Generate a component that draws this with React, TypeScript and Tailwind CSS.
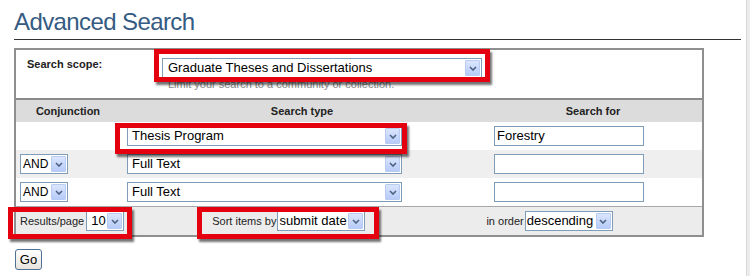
const font = "font-['Liberation_Sans',Arial,Helvetica,sans-serif]";

function Arrow() {
  return (
    <div className="m-px flex w-[15px] shrink-0 items-center justify-center rounded-[1px] border border-[#b8cbf3] bg-gradient-to-b from-[#dbe6fd] to-[#b7cbf8]">
      <svg width="8" height="5" viewBox="0 0 8 5">
        <path d="M1 1 L4 4 L7 1" fill="none" stroke="#4d6185" strokeWidth="1.6" />
      </svg>
    </div>
  );
}

function Select({
  text,
  width,
  size = "text-[13px]",
  pad = "pl-[3px]",
}: {
  text: string;
  width: string;
  size?: string;
  pad?: string;
}) {
  return (
    <div className={`flex h-[20px] shrink-0 border border-[#7f9db9] bg-white ${width}`}>
      <span className={`flex-1 overflow-hidden whitespace-nowrap leading-[18px] text-black ${pad} ${size}`}>
        {text}
      </span>
      <Arrow />
    </div>
  );
}

function Input({ value = "" }: { value?: string }) {
  return (
    <div className="h-[20px] w-[150px] border border-[#7f9db9] bg-white pl-[2px] text-[13px] leading-[18px] text-black">
      {value}
    </div>
  );
}

// annotation frames drawn over the form
function Mark({ className }: { className: string }) {
  return (
    <div
      className={`pointer-events-none absolute border-[5px] border-[#e5000f] shadow-[2px_3px_2px_rgba(0,0,0,0.55)] ${className}`}
    />
  );
}

function Row({ bg, conj, type }: { bg: string; conj?: boolean; type: string }) {
  return (
    <div className={`flex h-[28px] items-center ${bg}`}>
      <div className="w-[104px] pl-[4px]">
        {conj && <Select text="AND" width="w-[48px]" size="text-[12px]" pad="pl-[2px]" />}
      </div>
      <div className="w-[364px] pl-[7px]">
        <Select text={type} width="w-[275px]" pad="pl-[4px]" />
      </div>
      <div className="pl-[10px]">
        <Input value={type === "Thesis Program" ? "Forestry" : ""} />
      </div>
    </div>
  );
}

export default function App() {
  return (
    <div className={`relative flex h-[276px] w-[750px] overflow-hidden bg-white ${font}`}>
      <div className="flex flex-1 flex-col pl-[14px] pt-[8px]">
        <h1 className="text-[24px] leading-[28px] tracking-[-0.6px] text-[#355b82]">Advanced Search</h1>
        <div className="mt-[3px] h-px w-[727px] bg-[#333]" />

        <div className="mt-[8px] w-[690px] border-2 border-[#8f8f8f] text-[11px] text-[#222]">
          <div className="flex h-[50px] items-start border-b-2 border-[#8a8a8a] pl-[11px] pt-[7px]">
            <div className="w-[135px] font-bold leading-[14px]">Search scope:</div>
            <div className="mt-px flex flex-col">
              <Select text="Graduate Theses and Dissertations" width="w-[320px]" pad="pl-[5px]" />
              <span className="pl-[6px] text-[11px] leading-[12px] text-[#8a8a8a]">
                Limit your search to a community or collection.
              </span>
            </div>
          </div>

          <div className="flex h-[22px] items-center bg-[#dcdcdc] font-bold">
            <div className="w-[104px] text-center">Conjunction</div>
            <div className="w-[364px] text-center">Search type</div>
            <div className="flex-1 text-center">Search for</div>
          </div>

          <Row bg="bg-white" type="Thesis Program" />
          <Row bg="bg-[#efefef]" conj type="Full Text" />
          <Row bg="bg-white" conj type="Full Text" />

          <div className="flex h-[29px] items-center border-t border-[#a8a8a8] bg-[#ececec] pl-[4px]">
            <span className="mr-[2px]">Results/page</span>
            <Select text="10" width="w-[38px]" pad="pl-[4px]" />
            <span className="ml-[88px] mr-px">Sort items by</span>
            <Select text="submit date" width="w-[88px]" pad="pl-[1px]" />
            <span className="ml-[121px] mr-px">in order</span>
            <Select text="descending" width="w-[88px]" pad="pl-[1px]" />
          </div>
        </div>

        <button className="ml-px mt-[12px] h-[21px] w-[27px] rounded-[3px] border border-[#4f7196] bg-gradient-to-b from-white to-[#e6e4dc] text-[13px] leading-[19px] text-black">
          Go
        </button>
      </div>
      <div className="w-[4px] border-l border-[#d8d8d8] bg-[#ececec]" />

      <Mark className="left-[154px] top-[49px] h-[33px] w-[336px]" />
      <Mark className="left-[115px] top-[123px] h-[31px] w-[292px]" />
      <Mark className="left-[8px] top-[207px] h-[32px] w-[124px]" />
      <Mark className="left-[197px] top-[207px] h-[32px] w-[182px]" />
    </div>
  );
}
